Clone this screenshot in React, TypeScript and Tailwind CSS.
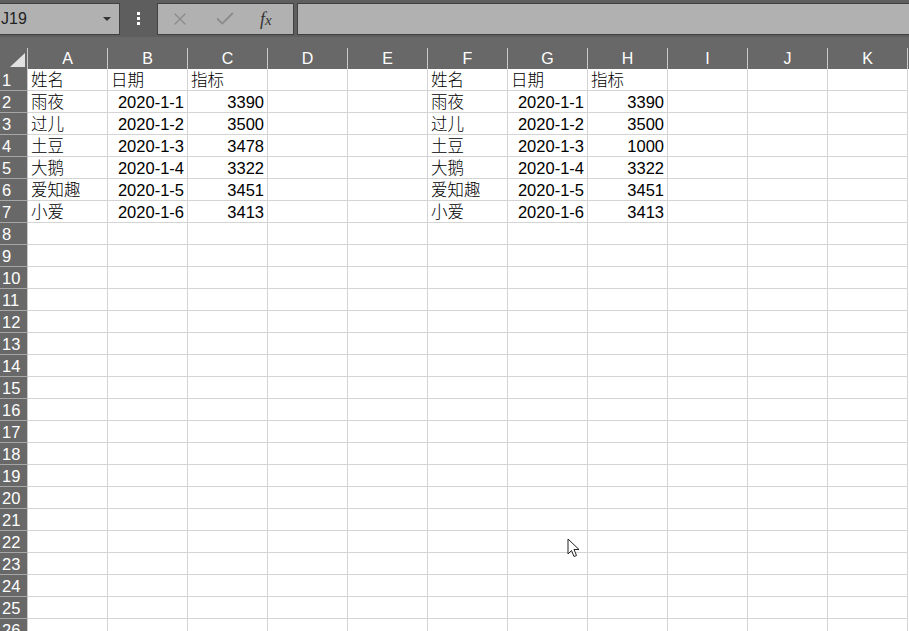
import { X, Check } from "lucide-react";

const cols = ["A", "B", "C", "D", "E", "F", "G", "H", "I", "J", "K"];

const left = [
  ["姓名", "日期", "指标"],
  ["雨夜", "2020-1-1", "3390"],
  ["过儿", "2020-1-2", "3500"],
  ["土豆", "2020-1-3", "3478"],
  ["大鹅", "2020-1-4", "3322"],
  ["爱知趣", "2020-1-5", "3451"],
  ["小爱", "2020-1-6", "3413"],
];

const right = [
  ["姓名", "日期", "指标"],
  ["雨夜", "2020-1-1", "3390"],
  ["过儿", "2020-1-2", "3500"],
  ["土豆", "2020-1-3", "1000"],
  ["大鹅", "2020-1-4", "3322"],
  ["爱知趣", "2020-1-5", "3451"],
  ["小爱", "2020-1-6", "3413"],
];

const font = "font-['Liberation_Sans','Noto_Sans_CJK_SC',sans-serif]";

function cellValue(r: number, c: number): { text: string; right: boolean; cjk: boolean } {
  let src: string[][] | null = null;
  let idx = -1;
  if (c <= 2) {
    src = left;
    idx = c;
  } else if (c >= 5 && c <= 7) {
    src = right;
    idx = c - 5;
  }
  if (!src || r >= src.length) return { text: "", right: false, cjk: false };
  const text = src[r][idx];
  // header row and names are text; dates and numbers sit to the right
  return { text, right: r > 0 && idx > 0, cjk: r === 0 || idx === 0 };
}

function Cell({ r, c }: { r: number; c: number }) {
  const { text, right, cjk } = cellValue(r, c);
  return (
    <div
      className={`w-[80px] h-[22px] shrink-0 border-r border-b border-[#d4d4d4] flex items-center pt-[2px] overflow-hidden whitespace-nowrap text-black ${
        cjk ? "text-[16.5px] font-light" : "text-[16.5px]"
      } ${right ? "justify-end pr-[3px]" : "justify-start pl-[3px]"}`}
    >
      {text}
    </div>
  );
}

export default function App() {
  const rows = Array.from({ length: 26 }, (_, i) => i);

  return (
    <div className={`relative w-[909px] h-[631px] overflow-hidden bg-white ${font}`}>
      {/* Formula bar */}
      <div className="h-[37px] bg-[#5e5e5e] flex items-center">
        <div className="w-[121px] h-[32px] -ml-[1px] bg-[#b1b1b1] border border-[#404040] flex items-center justify-between pl-[1px] pr-[8px]">
          <span className="text-[16px] text-[#222] leading-none">J19</span>
          <span className="w-0 h-0 border-l-[4px] border-r-[4px] border-t-[4px] border-l-transparent border-r-transparent border-t-[#333]" />
        </div>
        <div className="w-[37px] flex flex-col items-center gap-[2px]">
          <span className="w-[3px] h-[3px] bg-white" />
          <span className="w-[3px] h-[3px] bg-white" />
          <span className="w-[3px] h-[3px] bg-white" />
        </div>
        <div className="w-[137px] h-[32px] bg-[#b1b1b1] border border-[#404040] flex items-center pl-[12px]">
          <X className="w-[20px] h-[20px] text-[#8c8c8c]" strokeWidth={1.6} />
          <Check className="w-[22px] h-[22px] ml-[24px] text-[#8c8c8c]" strokeWidth={2} />
          <span className="ml-[24px] text-[18px] italic text-[#333] font-['Liberation_Serif',serif] leading-none">
            f<span className="text-[15px]">x</span>
          </span>
        </div>
        <div className="flex-1 h-[32px] ml-[3px] -mr-[2px] bg-[#b1b1b1] border border-[#404040]" />
      </div>

      {/* Column headers */}
      <div className="h-[32px] bg-[#686868] flex items-end">
        <div className="w-[28px] h-[21px] shrink-0 border-r border-[#c9c9c9] relative">
          <svg className="absolute right-[2px] bottom-[2px]" width="15" height="14" viewBox="0 0 15 14">
            <polygon points="15,0 15,14 0,14" fill="#e2e2e2" />
          </svg>
        </div>
        {cols.map((c) => (
          <div
            key={c}
            className="w-[80px] h-[21px] shrink-0 border-r border-[#c9c9c9] flex items-center justify-center text-[16px] text-white"
          >
            {c}
          </div>
        ))}
      </div>

      {/* Grid */}
      {rows.map((r) => (
        <div key={r} className="flex">
          <div className="w-[28px] h-[22px] shrink-0 bg-[#686868] border-r border-b border-r-[#c9c9c9] border-b-[#a6a6a6] flex items-center pt-[2px] pl-[2px] text-[16.5px] text-white">
            {r + 1}
          </div>
          {cols.map((_, c) => (
            <Cell key={c} r={r} c={c} />
          ))}
        </div>
      ))}

      {/* Mouse pointer */}
      <svg className="absolute left-[567px] top-[538px]" width="14" height="21" viewBox="0 0 14 21">
        <path
          d="M1 1 L1 16 L4.5 12.5 L7 18.5 L9.5 17.5 L7 11.5 L12 11.5 Z"
          fill="white"
          stroke="#222"
          strokeWidth="1"
          strokeLinejoin="miter"
        />
      </svg>
    </div>
  );
}
